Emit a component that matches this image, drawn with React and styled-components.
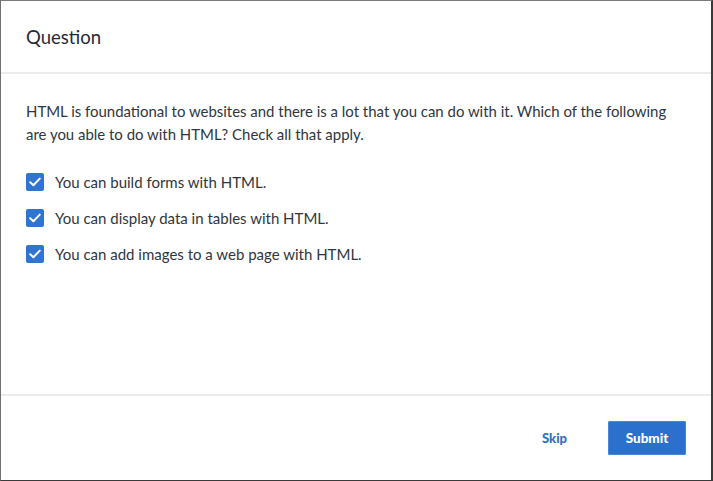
import React from 'react';
import styled, { createGlobalStyle } from 'styled-components';

const GlobalStyle = createGlobalStyle`
  html, body {
    margin: 0;
    padding: 0;
    background: #ffffff;
  }
  body {
    font-family: Lato, "Noto Sans", sans-serif;
    color: #333333;
  }
`;

const Modal = styled.div`
  box-sizing: border-box;
  width: 713px;
  height: 481px;
  display: flex;
  flex-direction: column;
  background: #ffffff;
  border-top: 1px solid #7b7b7b;
  border-left: 1px solid #6f6f6f;
  border-right: 2px solid #3a3a3a;
  border-bottom: 1px solid #3a3a3a;
`;

const Header = styled.header`
  height: 71px;
  display: flex;
  align-items: center;
  padding: 0 25px;
  border-bottom: 2px solid #ececec;
`;

const Title = styled.h1`
  margin: 0;
  font-size: 18.5px;
  font-weight: 400;
  color: #1f2a36;
`;

const Body = styled.div`
  flex: 1;
  padding: 26px 20px 0 25px;
`;

const Prompt = styled.p`
  max-width: 650px;
  margin: 0 0 27px;
  font-size: 14.95px;
  line-height: 23px;
  color: #2f3640;
`;

const Options = styled.ul`
  list-style: none;
  margin: 0;
  padding: 0;
  display: flex;
  flex-direction: column;
  gap: 18px;
`;

const Option = styled.li`
  display: flex;
  align-items: center;
  gap: 11px;
  font-size: 15px;
  color: #2f3640;
`;

const Box = styled.span`
  width: 18px;
  height: 18px;
  border-radius: 2px;
  background: ${(p) => (p.checked ? '#2f74d0' : '#ffffff')};
  display: inline-flex;
  align-items: center;
  justify-content: center;
  flex-shrink: 0;
`;

const Footer = styled.footer`
  height: 84px;
  display: flex;
  align-items: center;
  justify-content: flex-end;
  gap: 40px;
  padding: 0 25px 0 0;
  border-top: 2px solid #ececec;
`;

const Button = styled.button`
  font-family: inherit;
  font-size: ${(p) => (p.primary ? '13.5px' : '13px')};
  font-weight: 900;
  height: 34px;
  padding: 0 ${(p) => (p.primary ? '16px' : '0')};
  min-width: ${(p) => (p.primary ? '78px' : '0')};
  border: 1px solid ${(p) => (p.primary ? '#4a86d8' : 'transparent')};
  border-radius: 1px;
  background: ${(p) => (p.primary ? '#2b70cc' : 'transparent')};
  color: ${(p) => (p.primary ? '#ffffff' : '#2e6fc4')};
  cursor: pointer;
`;

const Check = () => (
  <svg width="12" height="10" viewBox="0 0 12 10">
    <path d="M1.2 5.2 L4.4 8.2 L10.8 1.6" fill="none" stroke="#ffffff" strokeWidth="2" strokeLinecap="round" strokeLinejoin="round" />
  </svg>
);

const options = [
  'You can build forms with HTML.',
  'You can display data in tables with HTML.',
  'You can add images to a web page with HTML.',
];

export default function App() {
  return (
    <>
      <GlobalStyle />
      <Modal>
        <Header>
          <Title>Question</Title>
        </Header>
        <Body>
          <Prompt>
            HTML is foundational to websites and there is a lot that you can do with it. Which of the following
            are you able to do with HTML? Check all that apply.
          </Prompt>
          <Options>
            {options.map((o) => (
              <Option key={o}>
                <Box checked>
                  <Check />
                </Box>
                {o}
              </Option>
            ))}
          </Options>
        </Body>
        <Footer>
          <Button>Skip</Button>
          <Button primary>Submit</Button>
        </Footer>
      </Modal>
    </>
  );
}
